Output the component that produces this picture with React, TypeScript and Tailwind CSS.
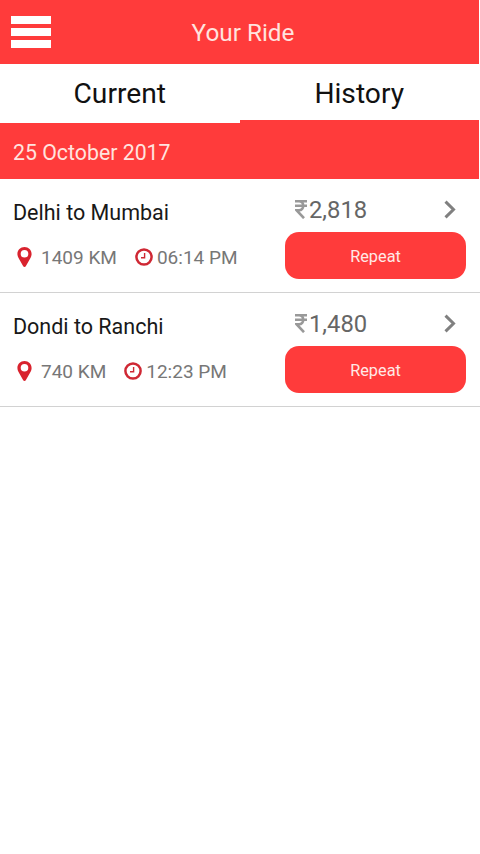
// App.tsx
// Ride history screen with tabs and a list of past rides

import { useState } from "react";

interface Ride {
  id: number;
  route: string;
  distance: string;
  time: string;
  fare: string;
}

type RideTab = "Current" | "History";

const TABS: RideTab[] = ["Current", "History"];

const RIDES: Ride[] = [
  { id: 1, route: "Delhi to Mumbai", distance: "1409 KM", time: "06:14 PM", fare: "2,818" },
  { id: 2, route: "Dondi to Ranchi", distance: "740 KM", time: "12:23 PM", fare: "1,480" },
];

function PinIcon() {
  return (
    <svg className="w-[15px] h-5 shrink-0" viewBox="0 0 15 20">
      <path
        fill="#d9232e"
        fillRule="evenodd"
        d="M7.5 0C3.4 0 .4 3 .4 6.9c0 1.5.4 2.6 1 3.8l4.8 8.5c.6 1 2 1 2.6 0l4.8-8.5c.6-1.2 1-2.3 1-3.8C14.6 3 11.6 0 7.5 0zm0 3a3.8 3.8 0 1 1 0 7.6 3.8 3.8 0 0 1 0-7.6z"
      />
    </svg>
  );
}

function ClockIcon() {
  return (
    <svg className="w-[18px] h-[18px] shrink-0" viewBox="0 0 18 18" fill="none" stroke="#cf2834">
      <circle cx="9" cy="9" r="7.6" strokeWidth="2.5" />
      <path d="M9.6 5v4.8H6" strokeWidth="1.4" />
    </svg>
  );
}

function RupeeIcon() {
  return (
    <svg className="w-3 h-[19px] shrink-0" viewBox="0 0 12 19" fill="none" stroke="#999999" strokeWidth="2.6">
      <path d="M0 1.3h12M0 5.8h12M0 1.3h4c5.6 0 5.6 8.9 0 8.9H1.5l7.5 8" />
    </svg>
  );
}

function ChevronIcon() {
  return (
    <svg className="w-3 h-[19px] shrink-0" viewBox="0 0 12 19" fill="none" stroke="#808080" strokeWidth="3">
      <path d="M1.5 1.6l8 7.9-8 7.9" />
    </svg>
  );
}

function RideRow({ ride }: { ride: Ride }) {
  return (
    <li className="flex h-[114px] justify-between border-b border-[#d2d2d2] pl-[13px] pr-3.5">
      {/* Route, distance and time */}
      <div className="flex flex-col pt-5">
        <h2 className="text-[21.5px] leading-7 text-[#181818]">{ride.route}</h2>
        <div className="mt-4 flex h-7 items-center pl-1 text-[19px] text-[#777777]">
          <PinIcon />
          <span className="ml-[9px] pt-0.5">{ride.distance}</span>
          <span className="ml-[18px] flex items-center gap-1">
            <ClockIcon />
            <span className="pt-0.5">{ride.time}</span>
          </span>
        </div>
      </div>

      {/* Fare and repeat button */}
      <div className="flex w-[181px] flex-col">
        <div className="flex h-[53px] items-center px-2.5 pt-2 text-[23.8px] text-[#666666]">
          <RupeeIcon />
          <span className="ml-0.5 flex-1 pt-[3px]">{ride.fare}</span>
          <ChevronIcon />
        </div>
        <button className="h-[47px] w-full rounded-[14px] bg-[#ff3b3b] pt-[3px] text-[16.3px] text-[#ffe9e6]">
          Repeat
        </button>
      </div>
    </li>
  );
}

export default function App() {
  const [activeTab, setActiveTab] = useState<RideTab>("History");

  return (
    <div className="min-h-screen w-full bg-white font-['Roboto',sans-serif]">
      {/* Top bar */}
      <header className="mr-px flex h-16 items-center bg-[#ff3b3b] pl-[11px]">
        <button className="flex w-10 flex-col gap-1" aria-label="Menu">
          <span className="h-2 w-full bg-white" />
          <span className="h-2 w-full bg-white" />
          <span className="h-2 w-full bg-white" />
        </button>
        <h1 className="flex-1 pr-11 pt-[3px] text-center text-[24.3px] text-[#ffe3df]">Your Ride</h1>
      </header>

      {/* Tabs */}
      <nav className="mr-px flex h-[59px]">
        {TABS.map((tab) => (
          <button
            key={tab}
            onClick={() => setActiveTab(tab)}
            className={
              tab === activeTab
                ? "flex-1 border-b-[3px] border-[#ff3b3b] pt-[5px] text-[28.2px] text-[#111111]"
                : "flex-1 border-b-[3px] border-transparent pt-[5px] text-[28.2px] text-[#111111]"
            }
          >
            {tab}
          </button>
        ))}
      </nav>

      {/* Date heading */}
      <div className="mr-px flex h-14 items-center bg-[#ff3b3b] pl-[13px] pt-1 text-[21.3px] text-[#ffe3df]">
        25 October 2017
      </div>

      <ul>
        {RIDES.map((ride) => (
          <RideRow key={ride.id} ride={ride} />
        ))}
      </ul>
    </div>
  );
}
